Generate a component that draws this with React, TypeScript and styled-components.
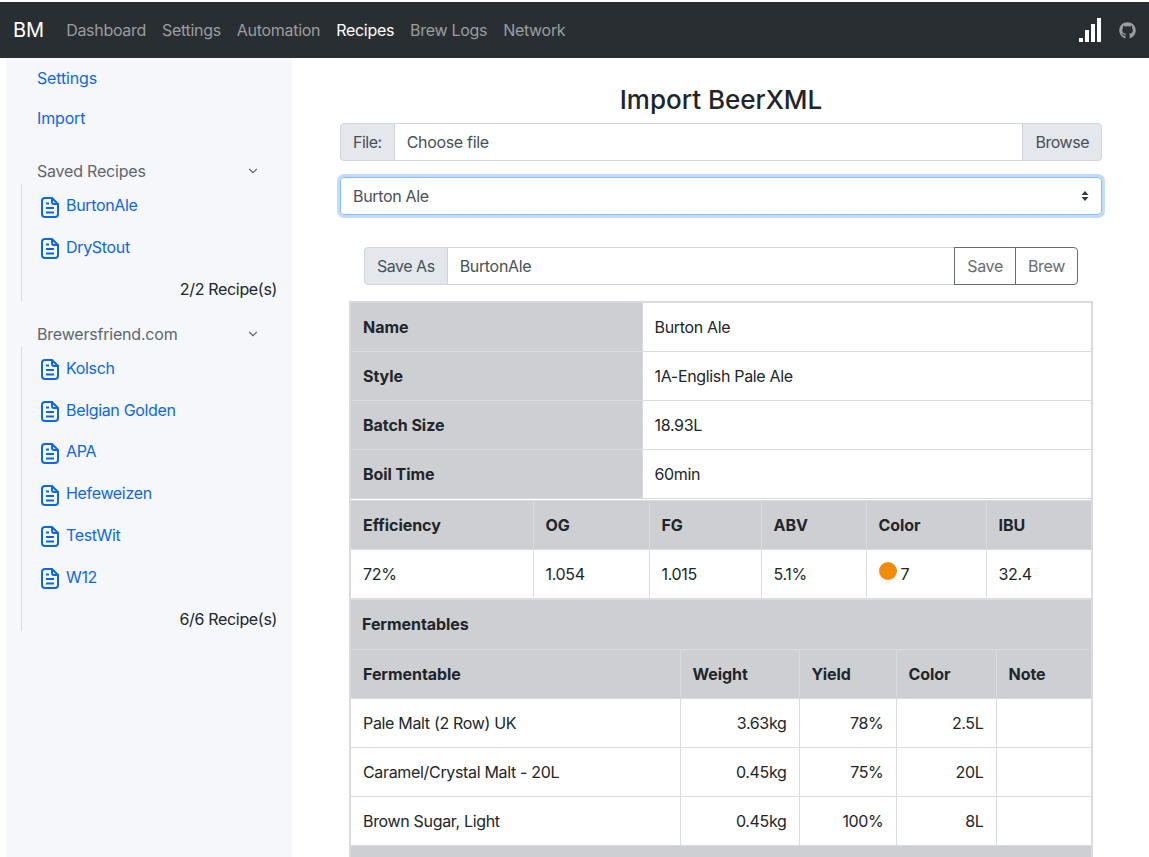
import React from 'react';
import styled, { createGlobalStyle } from 'styled-components';
import { FaGithub } from 'react-icons/fa';
import { FiChevronDown } from 'react-icons/fi';

const GlobalStyle = createGlobalStyle`
  html, body {
    margin: 0;
    height: 100%;
    overflow: hidden;
    background: #fff;
  }
  body {
    font-family: Inter, "Liberation Sans", sans-serif;
    font-size: 16px;
    line-height: 24px;
    letter-spacing: -0.33px;
    color: #212529;
  }
  * {
    box-sizing: border-box;
  }
`;

const Page = styled.div`
  height: 857px;
  padding-top: 2px;
  overflow: hidden;
  background: #fff;
`;

const Navbar = styled.nav`
  height: 56px;
  background: #292e33;
  display: flex;
  align-items: center;
  padding: 0 13px;
`;

const Brand = styled.div`
  color: #fff;
  font-size: 20px;
  letter-spacing: 0;
  margin-right: 22px;
`;

const NavLinks = styled.div`
  display: flex;
  gap: 16px;
  flex: 1;
  letter-spacing: -0.3px;
`;

const NavLink = styled.a<{ $active?: boolean }>`
  color: ${(p) => (p.$active ? '#fff' : '#9b9d9f')};
`;

const NavIcons = styled.div`
  display: flex;
  align-items: center;
  gap: 17px;
  color: #9b9d9f;
`;

const Body = styled.div`
  display: flex;
  height: 799px;
  padding-left: 6px;
`;

const Sidebar = styled.aside`
  width: 286px;
  flex: none;
  background: #f5f7fa;
`;

const SideLink = styled.a`
  display: block;
  padding: 8px 31px;
  color: #0f67e0;
  letter-spacing: -0.15px;
`;

const SideHeading = styled.div`
  display: flex;
  align-items: center;
  justify-content: space-between;
  padding: 0 32px 0 31px;
  color: #60666d;
  height: 24px;
  letter-spacing: -0.2px;
`;

const SideGroup = styled.div`
  margin-top: 21px;
`;

const SideList = styled.div`
  margin: 1.25px 0 0 15px;
  border-left: 1px solid #d8dbe0;
`;

const RecipeLink = styled.a`
  display: flex;
  align-items: center;
  gap: 7px;
  height: 41.75px;
  padding-left: 19px;
  color: #0f67e0;
`;

const RecipeCount = styled.div`
  text-align: right;
  padding: 9px 15px 0 0;
  height: 33px;
`;

const IconSlot = styled.svg`
  flex: none;
  margin-top: 4px;
`;

const Main = styled.main`
  flex: 1;
  padding: 19px 47px 0 48px;
  min-width: 0;
`;

const Title = styled.h2`
  margin: 0;
  text-align: center;
  font-size: 26px;
  line-height: 46px;
  font-weight: 500;
  letter-spacing: 0;
  color: #212529;
`;

const InputGroup = styled.div<{ $inset?: number }>`
  display: flex;
  height: 38px;
  margin: 0 ${(p) => p.$inset ?? 0}px;
`;

const Addon = styled.div<{ $end?: boolean }>`
  display: flex;
  align-items: center;
  padding: 0 12px;
  background: #e4e7eb;
  color: #495057;
  letter-spacing: -0.48px;
  border: 1px solid #ced4da;
  border-radius: ${(p) => (p.$end ? '0 4px 4px 0' : '4px 0 0 4px')};
  margin-left: ${(p) => (p.$end ? '-1px' : '0')};
`;

const InputBox = styled.div`
  flex: 1;
  display: flex;
  align-items: center;
  padding: 0 12px;
  margin-left: -1px;
  color: #495057;
  border: 1px solid #ced4da;
`;

const SelectBox = styled.div`
  height: 38px;
  margin: 16px 0 32px;
  display: flex;
  align-items: center;
  justify-content: space-between;
  padding: 0 12px;
  color: #495057;
  border: 1px solid #80bdff;
  border-radius: 4px;
  box-shadow: 0 0 0 3px rgba(13, 110, 253, 0.25);
`;

const OutlineButton = styled.button<{ $last?: boolean }>`
  font: inherit;
  letter-spacing: inherit;
  color: #666c73;
  background: #fff;
  padding: 0 12px;
  margin-left: -1px;
  border: 1px solid #666c73;
  border-radius: ${(p) => (p.$last ? '0 4px 4px 0' : '0')};
`;

const TableFrame = styled.div`
  margin: 16px 9px 0;
  border: 2px solid #d8dadd;
  border-bottom: 0;
`;

const Table = styled.table<{ $gap?: number }>`
  width: 100%;
  table-layout: fixed;
  border-collapse: collapse;
  margin-top: ${(p) => p.$gap ?? 0}px;
`;

const Col = styled.col<{ $w?: number }>`
  width: ${(p) => (p.$w ? `${p.$w}px` : 'auto')};
`;

const Cell = styled.td<{ $right?: boolean }>`
  height: 49px;
  padding: 12px;
  border: 1px solid #d8dbe0;
  background: #fff;
  text-align: ${(p) => (p.$right ? 'right' : 'left')};
  &:first-child {
    border-left: 0;
  }
  &:last-child {
    border-right: 0;
  }
`;

const HeadCell = styled(Cell).attrs({ as: 'th' })`
  background: #cdcfd3;
  font-weight: 700;
  letter-spacing: -0.05px;
  color: #212529;
  text-align: left;
`;

const BandCell = styled(HeadCell)`
  height: 50px;
  padding-left: 11px;
`;

const SummaryRow = styled.tr`
  &:first-child > * {
    border-top: 0;
    height: 48px;
    padding: 12px 12px 11px;
  }
`;

const Dot = styled.span`
  display: inline-block;
  width: 18px;
  height: 18px;
  border-radius: 50%;
  background: #f08c0a;
  margin-right: 4px;
  vertical-align: 0;
`;

const FileIcon = () => (
  <IconSlot width="18" height="21" viewBox="0 0 18 21" fill="none" stroke="#0f67e0" strokeWidth="2">
    <path d="M1 4a3 3 0 0 1 3-3h7l6 6v10a3 3 0 0 1-3 3H4a3 3 0 0 1-3-3z" />
    <path d="M11 1v4a2 2 0 0 0 2 2h4M5 6.500h3M5 11h8M5 15.500h8" />
  </IconSlot>
);

const SignalIcon = () => (
  <svg width="24" height="24" viewBox="0 0 24 24" fill="#fff">
    <rect x="1" y="20" width="4" height="4" />
    <rect x="7" y="12" width="4" height="12" />
    <rect x="13" y="6" width="4" height="18" />
    <rect x="19" y="0" width="4" height="24" />
  </svg>
);

const SortArrows = () => (
  <svg width="8" height="12" viewBox="0 0 8 12" fill="#343a40">
    <path d="M4 1 7.500 5H.5zM4 11 .5 7h7z" />
  </svg>
);

const savedRecipes = ['BurtonAle', 'DryStout'];
const friendRecipes = ['Kolsch', 'Belgian Golden', 'APA', 'Hefeweizen', 'TestWit', 'W12'];
const summary = [
  ['Name', 'Burton Ale'],
  ['Style', '1A-English Pale Ale'],
  ['Batch Size', '18.93L'],
  ['Boil Time', '60min'],
];
const fermentables = [
  ['Pale Malt (2 Row) UK', '3.63kg', '78%', '2.5L'],
  ['Caramel/Crystal Malt - 20L', '0.45kg', '75%', '20L'],
  ['Brown Sugar, Light', '0.45kg', '100%', '8L'],
];

const App: React.FC = () => (
  <Page>
    <GlobalStyle />
    <Navbar>
      <Brand>BM</Brand>
      <NavLinks>
        <NavLink>Dashboard</NavLink>
        <NavLink>Settings</NavLink>
        <NavLink>Automation</NavLink>
        <NavLink $active>Recipes</NavLink>
        <NavLink>Brew Logs</NavLink>
        <NavLink>Network</NavLink>
      </NavLinks>
      <NavIcons>
        <SignalIcon />
        <FaGithub size={17} />
      </NavIcons>
    </Navbar>
    <Body>
      <Sidebar>
        <SideLink>Settings</SideLink>
        <SideLink>Import</SideLink>
        <SideGroup>
          <SideHeading>
            Saved Recipes
            <FiChevronDown size={14} />
          </SideHeading>
          <SideList>
            {savedRecipes.map((name) => (
              <RecipeLink key={name}>
                <FileIcon />
                {name}
              </RecipeLink>
            ))}
            <RecipeCount>2/2 Recipe(s)</RecipeCount>
          </SideList>
        </SideGroup>
        <SideGroup>
          <SideHeading>
            Brewersfriend.com
            <FiChevronDown size={14} />
          </SideHeading>
          <SideList>
            {friendRecipes.map((name) => (
              <RecipeLink key={name}>
                <FileIcon />
                {name}
              </RecipeLink>
            ))}
            <RecipeCount>6/6 Recipe(s)</RecipeCount>
          </SideList>
        </SideGroup>
      </Sidebar>
      <Main>
        <Title>Import BeerXML</Title>
        <InputGroup>
          <Addon>File:</Addon>
          <InputBox>Choose file</InputBox>
          <Addon $end>Browse</Addon>
        </InputGroup>
        <SelectBox>
          Burton Ale
          <SortArrows />
        </SelectBox>
        <InputGroup $inset={24}>
          <Addon>Save As</Addon>
          <InputBox>BurtonAle</InputBox>
          <OutlineButton>Save</OutlineButton>
          <OutlineButton $last>Brew</OutlineButton>
        </InputGroup>
        <TableFrame>
          <Table>
            <colgroup>
              <Col $w={291} />
              <Col />
            </colgroup>
            <tbody>
              {summary.map(([label, value]) => (
                <SummaryRow key={label}>
                  <HeadCell>{label}</HeadCell>
                  <Cell>{value}</Cell>
                </SummaryRow>
              ))}
            </tbody>
          </Table>
          <Table $gap={1}>
            <colgroup>
              <Col $w={182} />
              <Col $w={116} />
              <Col $w={112} />
              <Col $w={105} />
              <Col $w={120} />
              <Col />
            </colgroup>
            <tbody>
              <tr>
                {['Efficiency', 'OG', 'FG', 'ABV', 'Color', 'IBU'].map((h) => (
                  <HeadCell key={h}>{h}</HeadCell>
                ))}
              </tr>
              <tr>
                <Cell>72%</Cell>
                <Cell>1.054</Cell>
                <Cell>1.015</Cell>
                <Cell>5.1%</Cell>
                <Cell>
                  <Dot />7
                </Cell>
                <Cell>32.4</Cell>
              </tr>
            </tbody>
          </Table>
          <Table>
            <colgroup>
              <Col $w={329} />
              <Col $w={119} />
              <Col $w={97} />
              <Col $w={100} />
              <Col />
            </colgroup>
            <tbody>
              <tr>
                <BandCell colSpan={5}>Fermentables</BandCell>
              </tr>
              <tr>
                {['Fermentable', 'Weight', 'Yield', 'Color', 'Note'].map((h) => (
                  <HeadCell key={h}>{h}</HeadCell>
                ))}
              </tr>
              {fermentables.map(([name, weight, yieldPct, color]) => (
                <tr key={name}>
                  <Cell>{name}</Cell>
                  <Cell $right>{weight}</Cell>
                  <Cell $right>{yieldPct}</Cell>
                  <Cell $right>{color}</Cell>
                  <Cell />
                </tr>
              ))}
              <tr>
                <HeadCell colSpan={5} />
              </tr>
            </tbody>
          </Table>
        </TableFrame>
      </Main>
    </Body>
  </Page>
);

export default App;
